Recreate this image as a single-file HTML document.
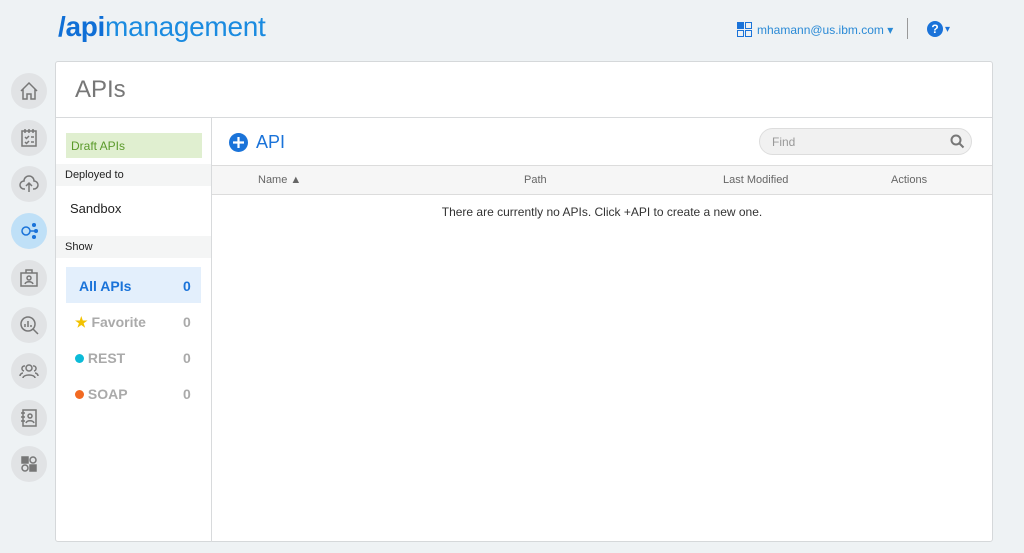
<!DOCTYPE html>
<html><head><meta charset="utf-8"><style>
*{margin:0;padding:0;box-sizing:border-box}
body{width:1024px;height:553px;background:#eef2f4;font-family:"Liberation Sans",sans-serif;position:relative;overflow:hidden}
.abs{position:absolute}
.logo{left:58px;top:11px;font-size:28px;color:#1a8be0;letter-spacing:-0.3px}
.logo b{color:#0f6fd6;font-weight:bold}
.ic{left:11px;width:36px;height:36px;border-radius:50%;background:#e1e3e5;display:flex;align-items:center;justify-content:center}
.ic svg{width:22px;height:22px;fill:none;stroke:#777;stroke-width:1.5}
.panel{left:55px;top:61px;width:938px;height:481px;background:#fff;border:1px solid #d5d8da;border-radius:3px}
.t{font-size:12px}
</style></head><body>
<div class="abs logo"><b>/api</b>management</div>
<div class="abs" style="left:737px;top:22px;width:15px;height:15px">
<svg width="15" height="15"><rect x="0.5" y="0.5" width="6" height="6" fill="#1a73d9" stroke="#1a73d9"/><rect x="8.5" y="0.5" width="6" height="6" fill="none" stroke="#1a73d9"/><rect x="0.5" y="8.5" width="6" height="6" fill="none" stroke="#1a73d9"/><rect x="8.5" y="8.5" width="6" height="6" fill="none" stroke="#1a73d9"/></svg></div>
<div class="abs" style="left:757px;top:23px;font-size:12px;color:#2a8ad6">mhamann@us.ibm.com ▾</div>
<div class="abs" style="left:907px;top:18px;width:1px;height:21px;background:#999"></div>
<div class="abs" style="left:927px;top:21px;width:16px;height:16px;border-radius:50%;background:#1a73d9;color:#fff;font-weight:bold;font-size:12px;text-align:center;line-height:16px">?</div>
<div class="abs" style="left:945px;top:24px;font-size:10px;color:#1a73d9">▾</div>

<div class="abs ic" style="top:73px"><svg viewBox="0 0 22 22"><path d="M3 11L11 3l8 8M5 9v10h4v-5h4v5h4V9"/></svg></div>
<div class="abs ic" style="top:120px"><svg viewBox="0 0 22 22"><rect x="4" y="4" width="14" height="15"/><path d="M7 2v4M11 2v4M15 2v4M7 10l1.5 1.5L11 9M13 10h3M7 15l1.5 1.5L11 14M13 15h3"/></svg></div>
<div class="abs ic" style="top:166px"><svg viewBox="0 0 22 22"><path d="M7 16H6a4 4 0 0 1 0-8 5 5 0 0 1 10 0 4 4 0 0 1 0 8h-1M11 19v-9M8 13l3-3 3 3"/></svg></div>
<div class="abs ic" style="top:213px;background:#bfe0f7"><svg viewBox="0 0 22 22" style="stroke:#1a73d9"><circle cx="8" cy="11" r="4"/><circle cx="16" cy="5" r="1.3" fill="#1a73d9"/><circle cx="18" cy="11" r="1.3" fill="#1a73d9"/><circle cx="16" cy="17" r="1.3" fill="#1a73d9"/><path d="M12 11h4"/></svg></div>
<div class="abs ic" style="top:260px"><svg viewBox="0 0 22 22"><rect x="3" y="6" width="16" height="13"/><path d="M8 6V3h6v3"/><circle cx="11" cy="11" r="2"/><path d="M7 17c1-3 7-3 8 0"/></svg></div>
<div class="abs ic" style="top:307px"><svg viewBox="0 0 22 22"><circle cx="10" cy="10" r="7"/><path d="M15 15l5 5M7 13v-3M10 13V7M13 13v-2"/></svg></div>
<div class="abs ic" style="top:353px"><svg viewBox="0 0 22 22"><circle cx="11" cy="8" r="3"/><path d="M5 18c0-4 12-4 12 0M6 11a2.5 2.5 0 1 1 1-5M16 11a2.5 2.5 0 1 0-1-5M2 16c0-2 2-3 3-3M20 16c0-2-2-3-3-3"/></svg></div>
<div class="abs ic" style="top:400px"><svg viewBox="0 0 22 22"><rect x="5" y="3" width="13" height="16"/><path d="M3 6h4M3 10h4M3 14h4"/><circle cx="12" cy="9" r="2"/><path d="M8 16c1-3 7-3 8 0"/></svg></div>
<div class="abs ic" style="top:446px"><svg viewBox="0 0 22 22"><rect x="4" y="4" width="6" height="6" fill="#777"/><rect x="12" y="12" width="6" height="6" fill="#777"/><circle cx="15" cy="7" r="3"/><circle cx="7" cy="15" r="3"/></svg></div>

<div class="abs panel">
<div class="abs" style="left:19px;top:14px;font-size:24px;color:#777">APIs</div>
<div class="abs" style="left:0;top:55px;width:936px;height:1px;background:#d8dadc"></div>
<div class="abs" style="left:155px;top:56px;width:1px;height:424px;background:#d8dadc"></div>
<div class="abs t" style="left:10px;top:71px;width:136px;height:25px;background:#e0efd0;color:#5a9a2a;padding:6px 5px;font-size:12px">Draft APIs</div>
<div class="abs" style="left:0;top:102px;width:155px;height:22px;background:#f4f5f5;font-size:11px;color:#222;padding:5px 9px">Deployed to</div>
<div class="abs" style="left:14px;top:139px;font-size:13px;color:#222">Sandbox</div>
<div class="abs" style="left:0;top:174px;width:155px;height:22px;background:#f4f5f5;font-size:11px;color:#222;padding:5px 9px">Show</div>
<div class="abs" style="left:10px;top:205px;width:135px;height:36px;background:#e3effc"></div>
<div class="abs" style="left:23px;top:216px;font-size:14px;font-weight:bold;color:#1a73d9">All APIs</div>
<div class="abs" style="left:127px;top:216px;font-size:14px;font-weight:bold;color:#1a73d9">0</div>
<div class="abs" style="left:19px;top:252px;font-size:14px;font-weight:bold;color:#aaa"><span style="color:#f2c200">★</span> Favorite</div>
<div class="abs" style="left:127px;top:252px;font-size:14px;font-weight:bold;color:#aaa">0</div>
<div class="abs" style="left:19px;top:288px;font-size:14px;font-weight:bold;color:#aaa"><span style="display:inline-block;width:9px;height:9px;border-radius:50%;background:#0cbbd8;vertical-align:0"></span> REST</div>
<div class="abs" style="left:127px;top:288px;font-size:14px;font-weight:bold;color:#aaa">0</div>
<div class="abs" style="left:19px;top:324px;font-size:14px;font-weight:bold;color:#aaa"><span style="display:inline-block;width:9px;height:9px;border-radius:50%;background:#f26a22;vertical-align:0"></span> SOAP</div>
<div class="abs" style="left:127px;top:324px;font-size:14px;font-weight:bold;color:#aaa">0</div>

<div class="abs" style="left:173px;top:71px;width:19px;height:19px;border-radius:50%;background:#1a73d9"><svg width="19" height="19"><path d="M9.5 4v11M4 9.5h11" stroke="#fff" stroke-width="2.2"/></svg></div>
<div class="abs" style="left:200px;top:70px;font-size:18px;color:#1a73d9">API</div>
<div class="abs" style="left:703px;top:66px;width:213px;height:27px;border:1px solid #ddd;border-radius:14px;background:#f1f1f1;font-size:12px;color:#999;padding:6px 12px">Find</div>
<svg class="abs" style="left:894px;top:72px" width="15" height="15"><circle cx="6" cy="6" r="4.5" fill="none" stroke="#777" stroke-width="2"/><path d="M9.5 9.5l4 4" stroke="#777" stroke-width="2"/></svg>
<div class="abs" style="left:156px;top:103px;width:780px;height:30px;background:#f6f6f6;border-top:1px solid #dcdcdc;border-bottom:1px solid #dcdcdc;font-size:11px;color:#666">
<span class="abs" style="left:46px;top:8px">Name ▲</span>
<span class="abs" style="left:312px;top:8px">Path</span>
<span class="abs" style="left:511px;top:8px">Last Modified</span>
<span class="abs" style="left:679px;top:8px">Actions</span></div>
<div class="abs" style="left:156px;top:143px;width:780px;text-align:center;font-size:12px;color:#333">There are currently no APIs. Click +API to create a new one.</div>
</div>
</body></html>
